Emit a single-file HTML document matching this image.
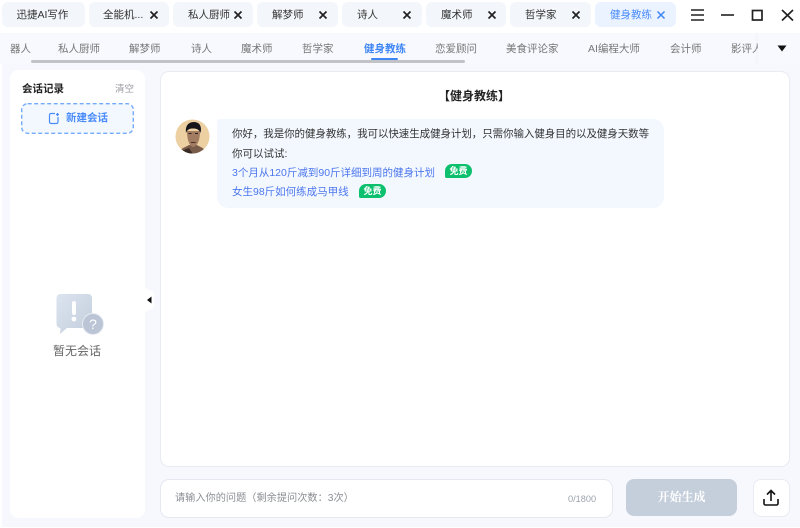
<!DOCTYPE html>
<html lang="zh"><head><meta charset="utf-8"><style>
html,body{margin:0;padding:0;width:800px;height:528px;overflow:hidden;background:#fff}
body{position:relative;font-family:"Liberation Sans","Noto Sans CJK SC",sans-serif;color:#333}
.a{position:absolute;white-space:nowrap}
.tab{position:absolute;top:2px;height:25px;background:#f3f6fa;border-radius:6px;font-size:10.5px;line-height:26px;color:#333}
.tab span{position:absolute;top:0;white-space:nowrap}
.tab svg{position:absolute;top:8px;width:10px;height:10px}
.nav{position:absolute;top:41px;font-size:10.5px;line-height:16px;color:#777;white-space:nowrap}
.t{position:absolute;font-size:10.5px;line-height:16px;white-space:nowrap}
.free{position:absolute;background:#0cc06e;color:#fff;font-size:9px;font-weight:700;line-height:14px;height:14px;width:27px;text-align:center;border-radius:8px 8px 8px 2px}
</style></head><body>
<div class="a" style="left:2px;top:33px;width:798px;height:494px;background:#f6f8fd"></div>
<div class="a" style="left:0;top:33px;width:800px;height:31px;background:#f8f9fe"></div>

<div class="tab" style="left:2px;width:83px"><span style="left:14.500px">迅捷AI写作</span></div>
<div class="tab" style="left:89px;width:80px"><span style="left:14px">全能机...</span><svg style="left:60px" viewBox="0 0 10 10"><path d="M1.500 1.500L8.500 8.500M8.500 1.500L1.500 8.500" stroke="#222" stroke-width="1.700"/></svg></div>
<div class="tab" style="left:173px;width:80px"><span style="left:15px">私人厨师</span><svg style="left:60px" viewBox="0 0 10 10"><path d="M1.500 1.500L8.500 8.500M8.500 1.500L1.500 8.500" stroke="#222" stroke-width="1.700"/></svg></div>
<div class="tab" style="left:257px;width:81px"><span style="left:15px">解梦师</span><svg style="left:61px" viewBox="0 0 10 10"><path d="M1.500 1.500L8.500 8.500M8.500 1.500L1.500 8.500" stroke="#222" stroke-width="1.700"/></svg></div>
<div class="tab" style="left:342px;width:80px"><span style="left:15px">诗人</span><svg style="left:60px" viewBox="0 0 10 10"><path d="M1.500 1.500L8.500 8.500M8.500 1.500L1.500 8.500" stroke="#222" stroke-width="1.700"/></svg></div>
<div class="tab" style="left:426px;width:80px"><span style="left:15px">魔术师</span><svg style="left:61px" viewBox="0 0 10 10"><path d="M1.500 1.500L8.500 8.500M8.500 1.500L1.500 8.500" stroke="#222" stroke-width="1.700"/></svg></div>
<div class="tab" style="left:510px;width:81px"><span style="left:15px">哲学家</span><svg style="left:61px" viewBox="0 0 10 10"><path d="M1.500 1.500L8.500 8.500M8.500 1.500L1.500 8.500" stroke="#222" stroke-width="1.700"/></svg></div>
<div class="tab" style="left:595px;width:81px;background:#eaf3ff;color:#4a8bfa"><span style="left:15px">健身教练</span><svg style="left:61px" viewBox="0 0 10 10"><path d="M1.500 1.500L8.500 8.500M8.500 1.500L1.500 8.500" stroke="#3f86f5" stroke-width="1.500"/></svg></div>

<svg class="a" style="left:690px;top:6px" width="105" height="16" viewBox="0 0 105 16" fill="none" stroke="#222">
<path d="M1 4H14M1 9H14M1 14H14" stroke-width="1.500"/>
<path d="M31 9H44" stroke-width="1.600"/>
<rect x="62.500" y="4.500" width="9.500" height="9.500" stroke-width="1.700"/>
<path d="M92 4L103 14.500M103 4L92 14.500" stroke-width="1.700"/>
</svg>

<div class="a" style="left:0;top:41px;width:760px;height:16px;overflow:hidden">
<div class="nav" style="left:10px;top:0">器人</div>
<div class="nav" style="left:58px;top:0">私人厨师</div>
<div class="nav" style="left:129px;top:0">解梦师</div>
<div class="nav" style="left:191px;top:0">诗人</div>
<div class="nav" style="left:241px;top:0">魔术师</div>
<div class="nav" style="left:302px;top:0">哲学家</div>
<div class="nav" style="left:364px;top:0;color:#3f86f5;font-weight:700">健身教练</div>
<div class="nav" style="left:435px;top:0">恋爱顾问</div>
<div class="nav" style="left:506px;top:0">美食评论家</div>
<div class="nav" style="left:588px;top:0">AI编程大师</div>
<div class="nav" style="left:670px;top:0">会计师</div>
<div class="nav" style="left:731px;top:0;width:27px;overflow:hidden">影评人</div>
</div>
<div class="a" style="left:371px;top:58px;width:27px;height:2px;background:#3f86f5;border-radius:1px"></div>
<div class="a" style="left:31px;top:60px;width:434px;height:3px;background:#c2c3c7;border-radius:2px"></div>
<div class="a" style="left:758px;top:33px;width:42px;height:31px;background:#f8f9fe;box-shadow:-2px 0 3px rgba(230,232,240,.3);clip-path:inset(0 0 0 -6px)"></div>
<svg class="a" style="left:777px;top:45px" width="10" height="7" viewBox="0 0 10 7"><path d="M0.500 0.500H9.500L5 6.500Z" fill="#111"/></svg>

<div class="a" style="left:10px;top:70px;width:135px;height:448px;background:#fff;border-radius:9px"></div>
<div class="a" style="left:22px;top:81px;font-size:10.500px;font-weight:700;line-height:16px;color:#222">会话记录</div>
<div class="a" style="left:115px;top:82px;font-size:9.500px;line-height:16px;color:#9a98a0">清空</div>
<div class="a" style="left:22px;top:104px;width:111px;height:29px;background:#f3f8ff;border-radius:6px"></div>
<svg class="a" style="left:21px;top:103px" width="113" height="31" viewBox="0 0 113 31" fill="none"><rect x="0.700" y="0.700" width="111.600" height="29.600" rx="6" stroke="#73aaf9" stroke-width="1.400" stroke-dasharray="4 2.500"/></svg>
<svg class="a" style="left:48px;top:112px" width="12" height="13" viewBox="0 0 12 13" fill="none" stroke="#4a8bfa" stroke-width="1.200"><path d="M7 1.500H3A1.500 1.500 0 0 0 1.500 3V10A1.500 1.500 0 0 0 3 11.500H8.500A1.500 1.500 0 0 0 10 10V5"/><path d="M9.500 1V4M8 2.500H11"/></svg>
<div class="a" style="left:66px;top:110px;font-size:10.500px;font-weight:700;line-height:16px;color:#4a8bfa">新建会话</div>

<svg class="a" style="left:55px;top:293px" width="50" height="43" viewBox="0 0 50 43">
<defs><linearGradient id="g" x1="0" y1="0" x2="1" y2="1"><stop offset="0" stop-color="#dbe4ef"/><stop offset="1" stop-color="#c4cddc"/></linearGradient></defs>
<path d="M5 1H33A4 4 0 0 1 37 5V31A4 4 0 0 1 33 35H12L5 41L5.500 35A4 4 0 0 1 1.500 31V5A4 4 0 0 1 5 1Z" fill="url(#g)"/>
<rect x="17" y="8" width="4" height="14" rx="2" fill="#fff"/>
<circle cx="19" cy="26" r="2.400" fill="#fff"/>
<circle cx="38" cy="31" r="10.500" fill="#bcc5d6" stroke="#e8edf4" stroke-width="1"/>
<text x="38" y="36" font-size="14" fill="#fff" text-anchor="middle" font-family="Liberation Sans">?</text>
</svg>
<div class="a" style="left:53px;top:342px;font-size:12px;line-height:18px;color:#666">暂无会话</div>

<svg class="a" style="left:145px;top:288px" width="10" height="24" viewBox="0 0 10 24"><path d="M0 0L9 4V20L0 24Z" fill="#fff"/><path d="M6.500 7.500V14.500L2 11Z" fill="#111" transform="translate(0,1)"/></svg>

<div class="a" style="left:159.500px;top:71px;width:628px;height:394px;background:#fff;border:1px solid #e8ebf2;border-radius:9px"></div>
<div class="a" style="left:159px;top:87px;width:630px;text-align:center;font-size:12px;font-weight:700;line-height:18px;color:#222">【健身教练】</div>

<svg class="a" style="left:175px;top:119px" width="35" height="35" viewBox="0 0 35 35">
<defs><clipPath id="c"><circle cx="17.500" cy="17.500" r="17"/></clipPath></defs>
<circle cx="17.500" cy="17.500" r="17" fill="#ecd0a2"/>
<g clip-path="url(#c)">
<path d="M3 35C5 29 11 28 14 26H22C25 28 30 29 33 35Z" fill="#7a5c4a"/>
<path d="M4 35C7 31 11 30 14 29L18 35Z" fill="#3a2a24"/>
<path d="M12 12C12 20 14 27 18 28C23 27 25 20 25 12Z" fill="#a27c60"/>
<path d="M11 14C10 6 14 3 19 3C25 3 27 8 25.500 14C24 10 21 9.500 18 9.500C15 9.500 12.500 10 11 14Z" fill="#15151a"/>
<path d="M13.500 14.500H16.500M20 14.500H23" stroke="#2d2220" stroke-width="1.100"/>
<path d="M16 23.500H20.500" stroke="#46302a" stroke-width="0.900"/>
</g></svg>

<div class="a" style="left:217px;top:119px;width:447px;height:89px;background:#f3f8ff;border-radius:3px 11px 11px 11px"></div>
<div class="t" style="left:232px;top:126px;color:#333;letter-spacing:-0.075px">你好，我是你的健身教练，我可以快速生成健身计划，只需你输入健身目的以及健身天数等</div>
<div class="t" style="left:232px;top:146px;color:#333">你可以试试:</div>
<div class="t" style="left:232px;top:165px;color:#4c76ee">3个月从120斤减到90斤详细到周的健身计划</div>
<div class="free" style="left:445px;top:164px">免费</div>
<div class="t" style="left:232px;top:184px;color:#4c76ee">女生98斤如何练成马甲线</div>
<div class="free" style="left:359px;top:184px">免费</div>

<div class="a" style="left:159.500px;top:479px;width:451px;height:37px;background:#fff;border:1px solid #e5e8f0;border-radius:9px"></div>
<div class="a" style="left:175px;top:491px;font-size:10.200px;line-height:16px;color:#8b8e94">请输入你的问题（剩余提问次数：3次）</div>
<div class="a" style="left:568px;top:491px;font-size:9.200px;line-height:16px;color:#9ca3ad">0/1800</div>
<div class="a" style="left:626px;top:479px;width:111px;height:37px;background:#c5cfdc;border-radius:8px;color:#fff;font-family:'Liberation Serif','Noto Serif CJK SC',serif;font-size:12px;font-weight:700;line-height:37px;text-align:center">开始生成</div>
<div class="a" style="left:752.500px;top:479px;width:35px;height:36px;background:#fff;border:1px solid #e8ebf2;border-radius:8px"></div>
<svg class="a" style="left:762px;top:489px" width="18" height="18" viewBox="0 0 18 18" fill="none" stroke="#111" stroke-width="1.600"><path d="M9 12V2M5 5.500L9 1.500L13 5.500"/><path d="M2 10V14.500A1.500 1.500 0 0 0 3.500 16H14.500A1.500 1.500 0 0 0 16 14.500V10"/></svg>
</body></html>
